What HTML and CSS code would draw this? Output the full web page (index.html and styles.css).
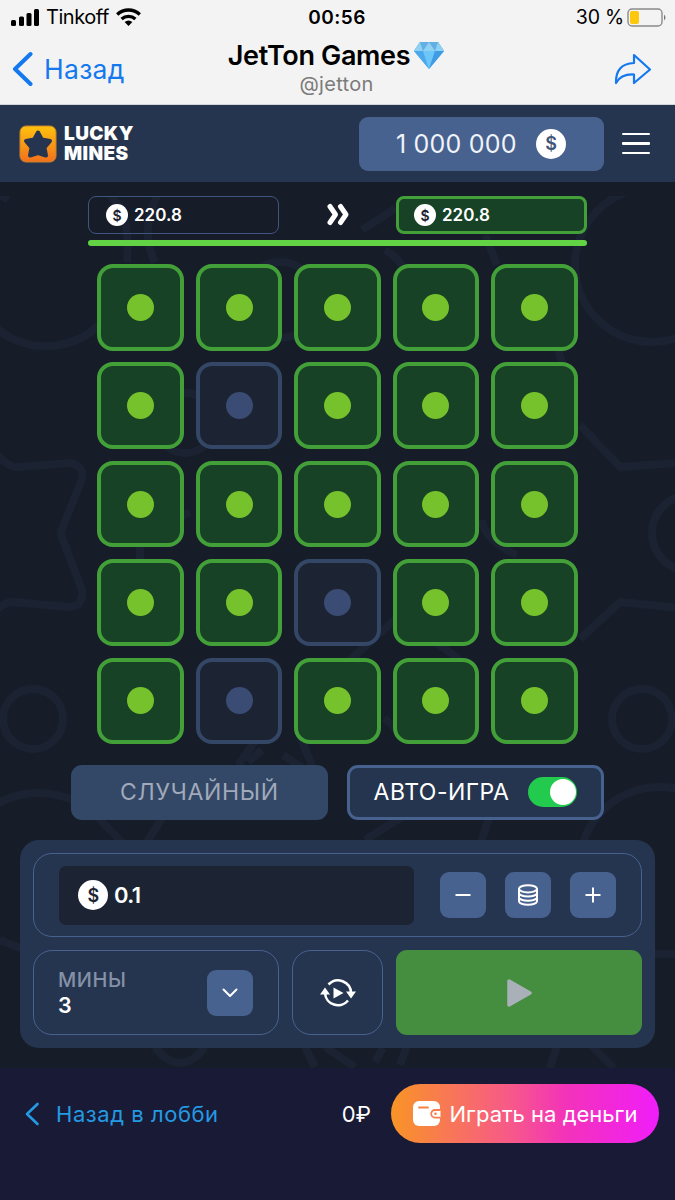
FILE: index.html
```html
<!DOCTYPE html>
<html lang="ru">
  <head>
    <meta charset="UTF-8" />
    <meta name="viewport" content="width=device-width, initial-scale=1.0" />
    <title>Lucky Mines</title>
    <link rel="stylesheet" href="styles.css">
  </head>
  <body>
    <div class="topbar">
      <div class="status">
        <div class="carrier">
          <svg width="29" height="18" viewBox="0 0 29 18">
            <rect x="0" y="12" width="5" height="6" rx="1.5" />
            <rect x="8" y="8.500" width="5" height="9.500" rx="1.500" />
            <rect x="15.500" y="5" width="5" height="13" rx="1.500" />
            <rect x="23" y="1" width="5" height="17" rx="1.500" />
          </svg>
          <span class="operator">Tinkoff</span>
          <svg width="25" height="18" viewBox="0 0 25 18" fill="none" stroke="#000" stroke-width="3.300">
            <path d="M1.200 6.500a16.500 16.500 0 0 1 22.600 0M5.600 11a10.200 10.200 0 0 1 13.800 0" />
            <path d="M8.600 14.100a6 6 0 0 1 7.800 0l-3.900 3.900z" fill="#000" stroke="none" />
          </svg>
        </div>
        <span class="clock">00:56</span>
        <div class="power">
          <span>30 %</span>
          <svg width="40" height="19" viewBox="0 0 40 19">
            <rect x="1" y="1" width="34" height="17" rx="4" fill="none" stroke="#8b8b8b" stroke-width="1.400" />
            <rect x="3" y="3" width="9" height="13" rx="2" fill="#fdc70c" />
            <path d="M37 6.500q3 3 0 6z" fill="#777" />
          </svg>
        </div>
      </div>
      <div class="nav">
        <div class="nav-back">
          <svg width="22" height="36" viewBox="0 0 22 36" fill="none" stroke="#1479ee" stroke-width="4" stroke-linecap="round" stroke-linejoin="round">
            <path d="M19.500 3L4 18l15.500 15" />
          </svg>
          <span>Назад</span>
        </div>
        <div class="nav-title">
          <div class="title-row">
            <span class="title">JetTon Games</span>
            <svg width="32" height="29" viewBox="0 0 32 29">
              <path d="M7 1h18l6 9-15 18L1 10z" fill="#55b6f5" />
              <path d="M7 1h18l6 9H1z" fill="#63aee2" />
              <path d="M7 1l3 9H1zM16 1l6 9H10zM25 1l-3 9 9 0z" fill="#8fd0f5" />
              <path d="M1 10h9l6 18z" fill="#4ba8ec" />
              <path d="M10 10h12l-6 18z" fill="#6cc6f8" />
              <path d="M22 10h9L16 28z" fill="#3f9be4" />
            </svg>
          </div>
          <div class="subtitle">@jetton</div>
        </div>
        <svg class="share" width="38" height="32" viewBox="0 0 38 32" fill="none" stroke="#1479ee" stroke-width="2.200" stroke-linejoin="round">
          <path d="M20 2l16 14.500L20 30v-8.500C10 21 5 24.500 2 30 1.500 18 7 10.500 20 10z" />
        </svg>
      </div>
    </div>

    <div class="header">
      <div class="logo">
        <svg width="38" height="38" viewBox="0 0 38 38">
          <defs>
            <linearGradient id="gold" x1="0" y1="0" x2="0" y2="1">
              <stop offset="0" stop-color="#ffc20e" />
              <stop offset="1" stop-color="#f2701d" />
            </linearGradient>
          </defs>
          <rect x="1" y="1" width="36" height="36" rx="6" fill="url(#gold)" stroke="#c98229" />
          <path d="M19 7.500l3.800 7 8.200 1.500-5.500 6.500 1.500 8-8-2.500-8 2.500 1.500-8L7 16l8.200-1.500z" fill="#253550" stroke="#253550" stroke-width="4" stroke-linejoin="round" />
        </svg>
        <div class="logo-text">
          <div>LUCKY</div>
          <div>MINES</div>
        </div>
      </div>
      <div class="balance">
        <span class="balance-value">1 000 000</span>
        <span class="coin coin-lg">$</span>
      </div>
      <div class="burger"><span></span><span></span><span></span></div>
    </div>

    <div class="game">
      <svg class="pattern" width="675" height="872" viewBox="0 196 675 872" fill="none" stroke="#1b2231" stroke-width="8" stroke-linejoin="round">
        <path d="M-20 310A78 78 0 0 0 122 285M-6 190l14 10" />
        <circle cx="652" cy="265" r="77" />
        <path d="M105 190c22 20 24 40 22 72M157 196c-12 25-12 45-2 66" />
        <path d="M-5 452q14 17 24 15l51-4q15 3 12 16l-20 50q-2 4 0 8l20 53q2 17-14 17l-55-5q-9 0-18 10" />
        <path d="M580 425l40 42 60-4M580 639l40-37 60 6M690 495a38 38 0 0 0 0 76" />
        <circle cx="33" cy="719" r="30" />
        <circle cx="642" cy="719" r="30" />
        <circle cx="280" cy="300" r="38" />
        <circle cx="185" cy="423" r="30" />
        <path d="M362 230l34-22M385 250q15 8 20 22M485 235l12 30M558 350l4 12M140 560v-20l50-28M482 520q2 20 35 35" />
        <path d="M238 765l20-28M300 737l12 28M248 762l14-12M283 755l18 12M350 660l50-45 60 45M384 718l14 12" />
        <path d="M-5 805a85 85 0 0 1 110 20l20 20M145 845l35-55M690 793a80 80 0 0 0-107 50M365 840l40-25M480 845l10-30" />
        <path d="M0 940l25 10M650 954h30M155 1047q25 32 50 0M305 1047l10 20M325 1047l30 20M375 1062l8-14M400 1065l8-22M550 1068l8-25M590 1044l24 24" />
      </svg>

      <div class="stats">
        <div class="stat"><span class="coin coin-sm">$</span>220.8</div>
        <svg width="24" height="24" viewBox="0 0 24 24" fill="none" stroke="#fff" stroke-width="5" stroke-linecap="round" stroke-linejoin="round">
          <path d="M4 3.500l5.500 8-5.500 8M14.500 3.500l5.500 8-5.500 8" />
        </svg>
        <div class="stat stat-win"><span class="coin coin-sm">$</span>220.8</div>
      </div>
      <div class="progress"></div>

      <div class="board">
        <div class="cell"></div><div class="cell"></div><div class="cell"></div><div class="cell"></div><div class="cell"></div>
        <div class="cell"></div><div class="cell off"></div><div class="cell"></div><div class="cell"></div><div class="cell"></div>
        <div class="cell"></div><div class="cell"></div><div class="cell"></div><div class="cell"></div><div class="cell"></div>
        <div class="cell"></div><div class="cell"></div><div class="cell off"></div><div class="cell"></div><div class="cell"></div>
        <div class="cell"></div><div class="cell off"></div><div class="cell"></div><div class="cell"></div><div class="cell"></div>
      </div>

      <div class="modes">
        <div class="mode random">СЛУЧАЙНЫЙ</div>
        <div class="mode auto">
          <span class="auto-label">АВТО-ИГРА</span>
          <span class="toggle"></span>
        </div>
      </div>

      <div class="panel">
        <div class="bet">
          <div class="bet-input"><span class="coin coin-lg">$</span><span>0.1</span></div>
          <div class="sq">
            <svg width="18" height="18" viewBox="0 0 18 18"><path d="M1.500 9h15" /></svg>
          </div>
          <div class="sq">
            <svg width="22" height="22" viewBox="0 0 22 22">
              <ellipse cx="11" cy="4.800" rx="9" ry="3.600" />
              <path d="M2 4.800v12.400c0 2 4 3.600 9 3.600s9-1.600 9-3.600V4.800M2 9c0 2 4 3.600 9 3.600S20 11 20 9M2 13.200c0 2 4 3.600 9 3.600s9-1.600 9-3.600" />
            </svg>
          </div>
          <div class="sq">
            <svg width="18" height="18" viewBox="0 0 18 18"><path d="M1.500 9h15M9 1.500v15" /></svg>
          </div>
        </div>
        <div class="actions">
          <div class="mines">
            <div>
              <div class="mines-label">МИНЫ</div>
              <div class="mines-value">3</div>
            </div>
            <div class="sq">
              <svg width="18" height="18" viewBox="0 0 18 18"><path d="M2.500 5.500L9 12l6.500-6.500" stroke-linecap="round" stroke-linejoin="round" /></svg>
            </div>
          </div>
          <div class="repeat">
            <svg width="38" height="32" viewBox="0 0 38 32" fill="none" stroke="#fff" stroke-width="2.600">
              <path d="M9.500 7.500A13 13 0 0 1 32 16M29 23.500A13 13 0 0 1 6 16" />
              <path d="M27 14.500h10l-5 7zM1 17.500h10l-5-7zM14.500 10.500l10 5.500-10 5.500z" fill="#fff" stroke="none" />
            </svg>
          </div>
          <div class="play">
            <svg width="27" height="30" viewBox="0 0 27 30">
              <path d="M3 3l21 12L3 27z" fill="#a9b0b8" stroke="#a9b0b8" stroke-width="3.500" stroke-linejoin="round" />
            </svg>
          </div>
        </div>
      </div>
    </div>

    <div class="footer">
      <div class="lobby">
        <svg width="15" height="24" viewBox="0 0 15 24" fill="none" stroke="#249ae3" stroke-width="2.600" stroke-linecap="round" stroke-linejoin="round">
          <path d="M12.500 2L2 12l10.500 10" />
        </svg>
        <span>Назад в лобби</span>
      </div>
      <span class="money">0₽</span>
      <div class="real">
        <svg width="29" height="26" viewBox="0 0 29 26">
          <rect x="1" y="0" width="27" height="25" rx="6" fill="#fff" />
          <path d="M7 6.500h9" stroke="#f78245" stroke-width="1.800" stroke-linecap="round" />
          <path d="M28.500 9H23a3.800 3.800 0 0 0 0 7.600h5.500" fill="#fff" stroke="#f87c4e" stroke-width="1.800" />
          <circle cx="23.500" cy="12.800" r="1.300" fill="#f87c4e" />
        </svg>
        <span>Играть на деньги</span>
      </div>
    </div>
  </body>
</html>
```

FILE: styles.css
```css
* {
  box-sizing: border-box;
}
body {
  margin: 0;
  width: 675px;
  height: 1200px;
  overflow: hidden;
  font-family: Inter, sans-serif;
  color: #fff;
  background-color: #161d29;
}
svg {
  display: block;
  flex: none;
}
span {
  white-space: nowrap;
}

/* phone status bar and chat title */
.topbar {
  height: 105px;
  background-color: #f3f3f3;
  border-bottom: 1px solid #d2d4d8;
  color: #000;
}
.status {
  display: grid;
  grid-template-columns: 1fr auto 1fr;
  align-items: center;
  height: 34px;
  padding: 0 12px 0 11px;
  font-size: 19.5px;
}
.carrier,
.power {
  display: flex;
  align-items: center;
}
.operator {
  margin: 0 7px 0 6px;
  font-size: 20px;
  letter-spacing: -0.45px;
}
.clock {
  font-weight: 600;
  font-size: 19px;
  letter-spacing: 0.5px;
}
.power {
  justify-content: flex-end;
  gap: 3px;
}
.power span {
  letter-spacing: -0.2px;
}
.power svg {
  margin-right: -4px;
}
.nav {
  display: grid;
  grid-template-columns: 1fr auto 1fr;
  height: 70px;
  padding: 0 23px 0 11px;
}
.nav-back {
  display: flex;
  align-items: center;
  gap: 11px;
  color: #1479ee;
  font-size: 26.5px;
  letter-spacing: 0.3px;
}
.nav-title {
  margin-left: 10px;
}
.title-row {
  display: flex;
  align-items: center;
  gap: 3px;
  margin-top: 6px;
  height: 31px;
}
.title {
  font-weight: 600;
  font-size: 27px;
  letter-spacing: -0.35px;
}
.subtitle {
  text-align: center;
  line-height: 27px;
  font-size: 20px;
  letter-spacing: 0.3px;
  color: #7b7b7b;
}
.share {
  justify-self: end;
  align-self: center;
}

/* game header */
.header {
  display: flex;
  align-items: center;
  height: 77px;
  padding: 0 25px 0 19px;
  background-color: #253550;
}
.logo {
  display: flex;
  align-items: center;
  gap: 7px;
  flex: 1;
}
.logo-text {
  font-weight: 900;
  font-size: 19px;
  line-height: 20px;
  letter-spacing: 0.4px;
}
.balance {
  display: flex;
  align-items: center;
  justify-content: space-between;
  width: 245px;
  height: 54px;
  padding: 0 38px 0 37px;
  border-radius: 9px;
  background-color: #47628f;
}
.balance-value {
  font-size: 25px;
  letter-spacing: 0.2px;
  color: #f0f3f8;
}
.coin {
  display: flex;
  align-items: center;
  justify-content: center;
  flex: none;
  border-radius: 50%;
  background-color: #fff;
  color: #1c2433;
  font-weight: 600;
}
.coin-lg {
  width: 30px;
  height: 30px;
  font-size: 18px;
}
.coin-sm {
  width: 22px;
  height: 22px;
  font-size: 14px;
}
.balance .coin {
  color: #3f5579;
}
.burger {
  display: flex;
  flex-direction: column;
  gap: 7px;
  margin-left: 18px;
}
.burger span {
  width: 28px;
  height: 2.5px;
  border-radius: 1px;
  background-color: #fff;
}

/* game field */
.game {
  position: relative;
  display: flex;
  flex-direction: column;
  align-items: center;
  height: 886px;
  padding-top: 14px;
  background-color: #161d29;
}
.pattern {
  position: absolute;
  top: 14px;
  left: 0;
}
.game > div {
  position: relative;
}
.stats {
  display: flex;
  align-items: center;
  justify-content: space-between;
  width: 499px;
  height: 38px;
}
.stat {
  display: flex;
  align-items: center;
  gap: 6px;
  width: 191px;
  height: 38px;
  padding-left: 17px;
  border: 1.5px solid #40557f;
  border-radius: 8px;
  font-weight: 600;
  font-size: 17px;
}
.stat-win {
  border: 3px solid #43a038;
  background-color: #174225;
  padding-left: 15px;
}
.progress {
  width: 499px;
  height: 6px;
  margin-top: 6px;
  border-radius: 3px;
  background-color: #61d344;
}
.board {
  display: grid;
  grid-template-columns: repeat(5, 86.6px);
  grid-auto-rows: 86.6px;
  gap: 11.8px;
  margin-top: 18px;
}
.cell {
  display: flex;
  align-items: center;
  justify-content: center;
  border: 4px solid #43a038;
  border-radius: 16px;
  background-color: #174225;
}
.cell::after {
  content: "";
  width: 27px;
  height: 27px;
  border-radius: 50%;
  background-color: #76c22d;
}
.off {
  border-color: #344767;
  background-color: #1c2433;
}
.off::after {
  background-color: #3a4c73;
}
.modes {
  display: flex;
  gap: 19px;
  margin-top: 20.8px;
}
.mode {
  display: flex;
  align-items: center;
  justify-content: center;
  width: 257px;
  height: 55px;
  border-radius: 11px;
  font-size: 23px;
}
.random {
  background-color: #334766;
  color: #a0aabb;
  letter-spacing: 0.7px;
}
.auto {
  gap: 19px;
  border: 3.5px solid #47628f;
  background-color: #253550;
}
.auto-label {
  letter-spacing: 0.5px;
}
.toggle {
  display: flex;
  justify-content: flex-end;
  width: 49px;
  height: 30px;
  padding: 2px 1px;
  border-radius: 15px;
  background-color: #22cb4e;
}
.toggle::after {
  content: "";
  width: 26px;
  height: 26px;
  border-radius: 50%;
  background-color: #fff;
}

/* bet controls */
.panel {
  display: flex;
  flex-direction: column;
  gap: 13px;
  width: 635px;
  height: 208px;
  margin-top: 20px;
  padding: 13px;
  border-radius: 19px;
  background-color: #253550;
}
.bet,
.mines,
.repeat {
  display: flex;
  align-items: center;
  border: 1.5px solid #47628f;
  border-radius: 19px;
}
.bet {
  height: 85px;
  gap: 19px;
  padding: 0 25px;
}
.bet-input {
  display: flex;
  align-items: center;
  gap: 6px;
  width: 356px;
  height: 59px;
  margin-right: 7px;
  padding-left: 19px;
  border-radius: 7px;
  background-color: #1c2433;
  font-weight: 600;
  font-size: 22px;
  letter-spacing: -0.6px;
}
.sq {
  display: flex;
  align-items: center;
  justify-content: center;
  flex: none;
  width: 46px;
  height: 46px;
  border-radius: 9px;
  background-color: #47628f;
}
.sq svg {
  fill: none;
  stroke: #fff;
  stroke-width: 2;
}
.actions {
  display: flex;
  gap: 13px;
  height: 85px;
}
.mines {
  justify-content: space-between;
  width: 246px;
  padding: 0 25px 0 24px;
}
.mines-label {
  line-height: 26px;
  font-weight: 500;
  font-size: 20px;
  letter-spacing: 0.6px;
  color: #8491a7;
}
.mines-value {
  line-height: 25px;
  font-weight: 600;
  font-size: 21.5px;
}
.repeat {
  justify-content: center;
  width: 91px;
}
.play {
  display: flex;
  align-items: center;
  justify-content: center;
  flex: 1;
  border-radius: 11px;
  background-color: #458d3f;
}

/* bottom bar */
.footer {
  display: flex;
  align-items: center;
  height: 132px;
  padding: 0 16px 41px 25px;
  background-color: #191a35;
  font-size: 22px;
}
.lobby {
  display: flex;
  align-items: center;
  gap: 16px;
  flex: 1;
  color: #249ae3;
  letter-spacing: 0.55px;
}
.money {
  margin-right: 20px;
}
.real {
  display: flex;
  align-items: center;
  justify-content: center;
  gap: 8px;
  width: 268px;
  height: 59px;
  border-radius: 30px;
  background: linear-gradient(90deg, #f99426, #f7588a 45%, #f333b9 65%, #f01dfa);
}
```
